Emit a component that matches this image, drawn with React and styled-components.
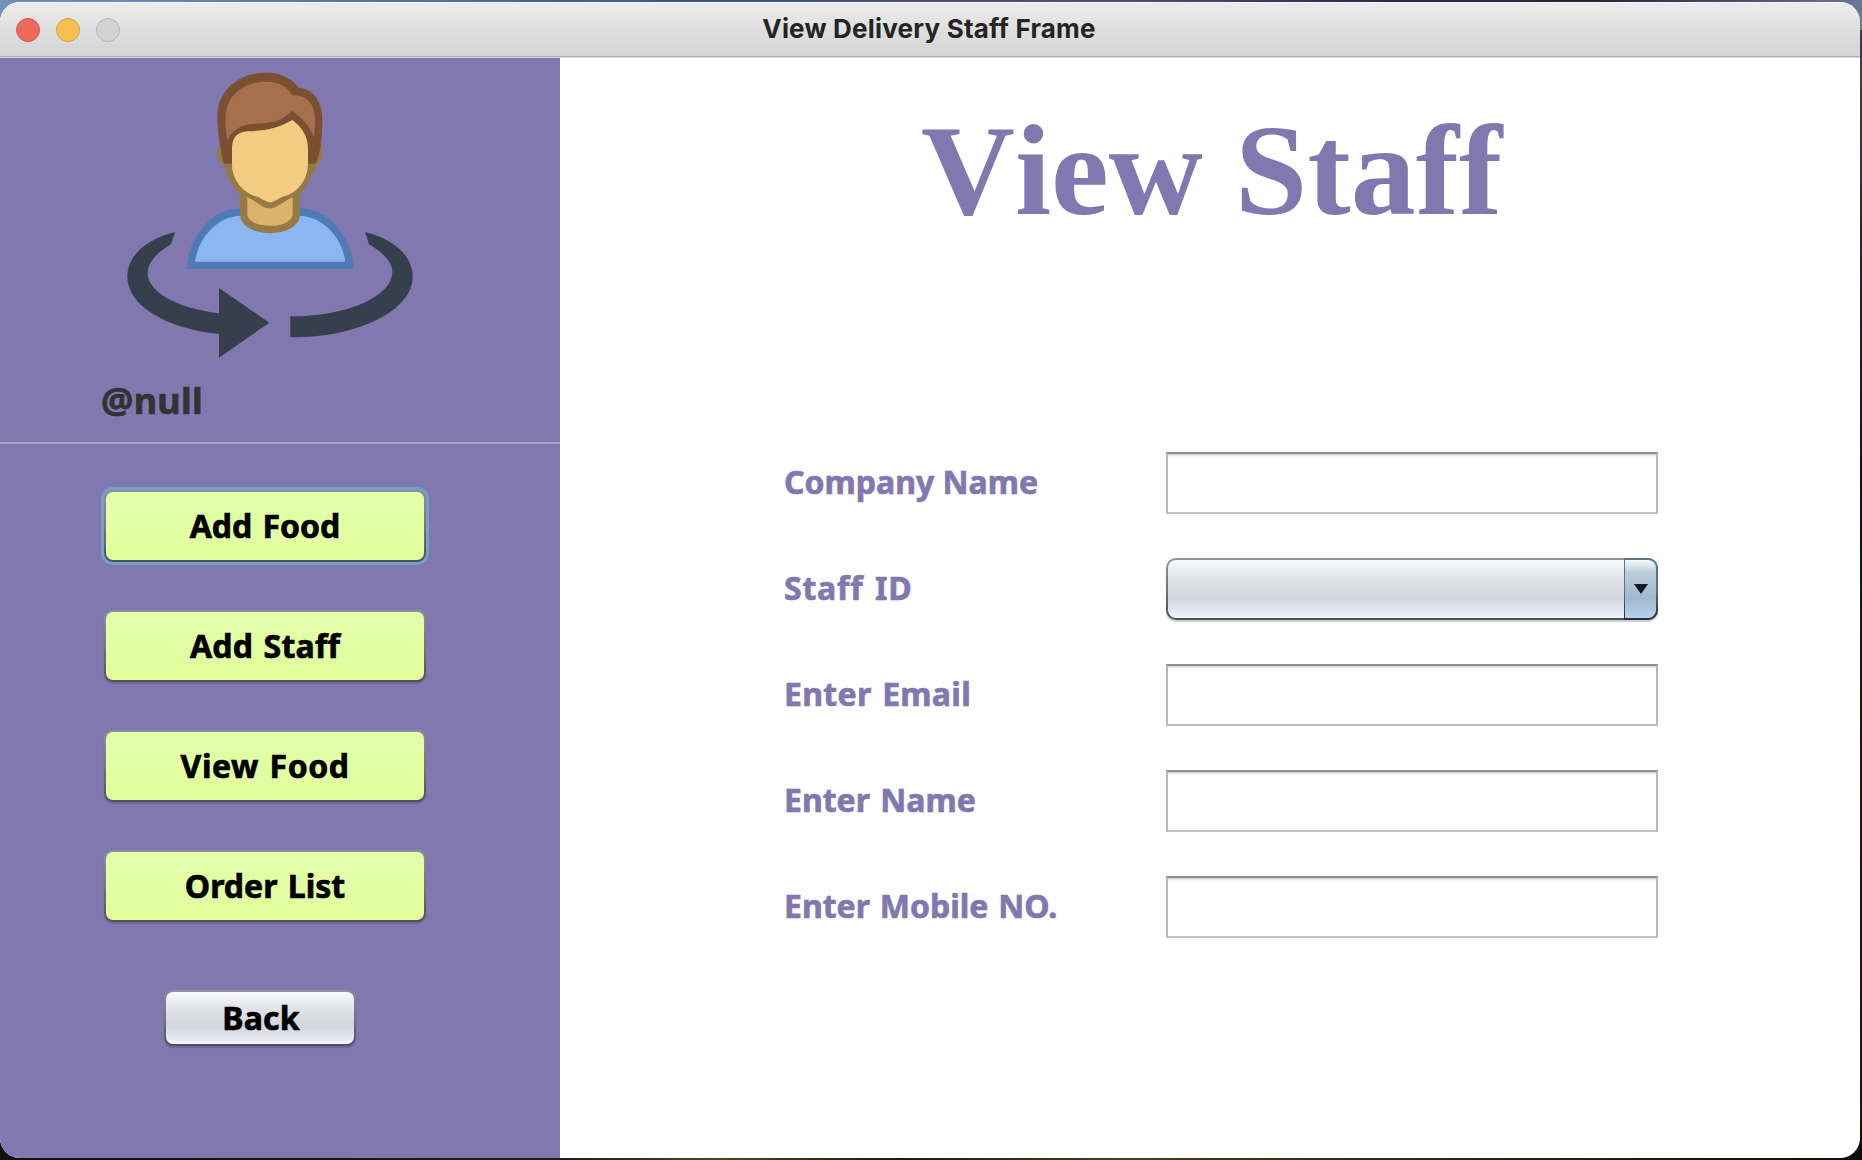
import React from 'react';
import styled, { createGlobalStyle, css } from 'styled-components';

const PURPLE = '#8278b0';
const UI_FONT = '"Noto Sans", "Open Sans", sans-serif';

const GlobalStyle = createGlobalStyle`
  * { box-sizing: border-box; }
  body { margin: 0; overflow: hidden; }
`;

const Desktop = styled.div`
  height: 1160px;
  padding: 2px 2px 2px 0;
  background:
    linear-gradient(90deg, #7191b8 0, #5c7ba6 300px, #42588a 650px, #47507c 900px, #504a72 1150px, #2c2740 1400px, #27253a 1600px, #6b7793 1862px) top / 100% 30px no-repeat,
    linear-gradient(90deg, #12140c 0, #1c1d12 560px, #4f4326 720px, #1c1a0e 900px, #453d22 1120px, #25251a 1450px, #0d0e09 1862px) bottom / 100% 30px no-repeat,
    linear-gradient(180deg, #3b4256 0, #0d131b 500px, #17181a 640px, #24140f 780px, #101a10 1160px);
`;

const Window = styled.div`
  display: flex;
  flex-direction: column;
  height: 1156px;
  overflow: hidden;
  border-radius: 20px;
  background: #fff;
`;

const TitleBar = styled.header`
  display: grid;
  grid-template-columns: 1fr auto 1fr;
  align-items: center;
  flex: none;
  height: 56px;
  padding: 0 16px;
  background: linear-gradient(#ececec, #d3d3d3);
  border-bottom: 1px solid #dcdcdc;
  box-shadow: inset 0 -1px #aeaeae, inset 0 1px #f6f6f6;
`;

const Lights = styled.div`
  display: flex;
  gap: 16px;
  padding-top: 1px;
`;

const Light = styled.span`
  width: 24px;
  height: 24px;
  border-radius: 50%;
  background: ${(p) => p.$fill};
  border: 1px solid ${(p) => p.$edge};
`;

const WindowTitle = styled.h1`
  margin: 0 2px 2px 0;
  font: bold 26px/32px Inter, sans-serif;
  letter-spacing: 0.2px;
  color: #242424;
`;

const Body = styled.div`
  display: flex;
  flex: 1;
`;

const Sidebar = styled.aside`
  width: 560px;
  background: ${PURPLE};
`;

const Profile = styled.section`
  height: 386px;
  padding: 2px 0 0 100px;
  border-bottom: 2px solid #a9a2bb;
`;

const Avatar = styled.svg`
  display: block;
  width: 320px;
  height: 310px;
  margin-left: 10px;
`;

const UserName = styled.div`
  margin: 6px 0 0 1px;
  font: bold 36px/50px ${UI_FONT};
  letter-spacing: 0.3px;
  -webkit-text-stroke: 0.7px currentColor;
  color: #333;
`;

const Nav = styled.nav`
  display: flex;
  flex-direction: column;
  align-items: flex-start;
  gap: 48px;
  padding: 46px 0 0 104px;
`;

const silver = 'linear-gradient(#fafbfc 0%, #e4e5e8 28%, #d9dbdf 50%, #d4d7df 68%, #e2e5ee 85%, #f3f5fd 100%)';
const lime = 'linear-gradient(#e3ffab, #e0ff9c)';
const edge = 'linear-gradient(#90929a, #74767c 50%, #4c5057)';

const Button = styled.button`
  width: 322px;
  height: 72px;
  padding: 0;
  border: 2px solid transparent;
  border-radius: 9px;
  background: ${lime} padding-box, ${edge} border-box;
  box-shadow: 0 2px 1px rgba(60, 60, 80, 0.3);
  font: bold 32px/44px ${UI_FONT};
  letter-spacing: ${(p) => p.$track || 0}px;
  word-spacing: 2px;
  -webkit-text-stroke: 0.7px currentColor;
  color: #000;

  ${(p) => p.$focused && css`
    box-shadow: 0 0 0 3px #73a0cb;
  `}

  ${(p) => p.$plain && css`
    width: 192px;
    height: 56px;
    margin: 20px 0 0 60px;
    padding-left: 2px;
    background: ${silver} padding-box, ${edge} border-box;
  `}
`;

const Content = styled.main`
  flex: 1;
`;

const Heading = styled.h2`
  width: 583px;
  height: 144px;
  margin: 40px 0 0 361px;
  overflow: hidden;
  white-space: nowrap;
  font: bold 130px/144px "Liberation Serif", serif;
  font-kerning: none;
  font-variant-ligatures: none;
  color: ${PURPLE};
`;

const Form = styled.form`
  display: grid;
  grid-template-columns: 382px 492px;
  grid-auto-rows: 62px;
  row-gap: 44px;
  margin: 210px 0 0 224px;
`;

const Label = styled.label`
  padding-top: 8px;
  font: bold 32px/44px ${UI_FONT};
  letter-spacing: ${(p) => p.$track || 0}px;
  word-spacing: ${(p) => p.$word || 0}px;
  -webkit-text-stroke: 0.7px currentColor;
  white-space: nowrap;
  color: ${PURPLE};
`;

const Input = styled.input`
  width: 100%;
  height: 62px;
  border: 2px solid #b8b8b8;
  border-top-color: #8d8d8d;
  border-bottom-color: #c0c0c0;
  border-radius: 0;
  background: linear-gradient(#d2d2d2, #f3f3f3 2px, #fff 4px);
  outline: none;
`;

const Combo = styled.div`
  display: flex;
  justify-content: flex-end;
  height: 62px;
  border: 2px solid transparent;
  border-radius: 10px;
  background: ${silver} padding-box, ${edge} border-box;
  box-shadow: 0 2px 1px #cbcdd0;
`;

const ComboArrow = styled.span`
  display: flex;
  align-items: center;
  justify-content: center;
  width: 34px;
  height: 62px;
  margin: -2px -2px 0 0;
  border: 2px solid transparent;
  border-left-width: 1px;
  border-radius: 0 10px 10px 0;
  background:
    linear-gradient(#f4f8fa 0%, #bccdd9 22%, #a9c0d2 50%, #a0b8d0 66%, #b9d1e8 100%) padding-box,
    linear-gradient(#5d7485, #5c7284 50%, #1f3142) border-box;
`;

const Triangle = styled.span`
  margin: 0 0 1px 1px;
  border: 7px solid transparent;
  border-top: 10px solid #15181a;
  border-bottom: 0;
`;

const Person = () => (
  <Avatar viewBox="0 0 960 930">
    <g fill="#36404d">
      <path d="M195 516C105 538 52 590 52 650C52 735 165 805 327 822V893L478 788L327 684V760C200 745 113 695 113 640C113 608 140 578 183 553Z" />
      <path d="M765 516C855 538 908 590 908 650C908 750 750 832 541 832V769C710 769 847 710 847 635C847 605 815 575 777 553Z" />
    </g>
    <path d="M243 616C250 525 320 456 395 456H565C640 456 712 525 718 616Z" fill="#8bb7f0" stroke="#4e7ab5" strokeWidth="22" />
    <path d="M401 395V462C401 524 559 524 559 462V395Z" fill="#dab26c" stroke="#967a44" strokeWidth="22" />
    <path d="M328 256C317 280 322 302 345 322C352 355 370 385 390 403C440 420 455 445 480 445C505 445 520 420 570 403C590 380 605 350 618 322C638 300 643 280 634 256Z" fill="#967a44" />
    <path d="M342 311C335 285 322 225 322 170C322 92 385 38 470 38C515 38 546 56 566 83C611 86 637 125 637 180C637 230 632 280 617 311Z" fill="#7b4f32" />
    <path d="M352 240C347 215 346 190 347 165C352 105 400 65 470 65C507 65 532 80 547 106C592 106 615 132 615 180C615 200 614 220 611 232C600 200 575 170 545 153C520 180 490 191 430 191C395 193 365 210 352 240Z" fill="#a6704d" />
    <path d="M366 270C366 228 385 214 420 214C470 212 510 202 547 180C575 200 594 230 594 265V312C592 365 560 398 525 408C505 414 492 427 480 427C468 427 455 414 435 408C398 396 366 360 366 312Z" fill="#f3cc83" />
  </Avatar>
);

export default function App() {
  return (
    <Desktop>
      <GlobalStyle />
      <Window>
        <TitleBar>
          <Lights>
            <Light $fill="#ed695e" $edge="#d8564c" />
            <Light $fill="#f4bf4e" $edge="#d3a33f" />
            <Light $fill="#d3d3d3" $edge="#b5b5b5" />
          </Lights>
          <WindowTitle>View Delivery Staff Frame</WindowTitle>
        </TitleBar>
        <Body>
          <Sidebar>
            <Profile>
              <Person />
              <UserName>@null</UserName>
            </Profile>
            <Nav>
              <Button $focused>Add Food</Button>
              <Button $track={0.2}>Add Staff</Button>
              <Button $track={0.5}>View Food</Button>
              <Button>Order List</Button>
              <Button $plain $track={0.2}>Back</Button>
            </Nav>
          </Sidebar>
          <Content>
            <Heading>View Staff</Heading>
            <Form>
              <Label>Company Name</Label>
              <Input />
              <Label $track={0.8} $word={2.5}>Staff ID</Label>
              <Combo>
                <ComboArrow><Triangle /></ComboArrow>
              </Combo>
              <Label $track={0.3} $word={2}>Enter Email</Label>
              <Input />
              <Label $word={2}>Enter Name</Label>
              <Input />
              <Label $word={1.5}>Enter Mobile NO.</Label>
              <Input />
            </Form>
          </Content>
        </Body>
      </Window>
    </Desktop>
  );
}
